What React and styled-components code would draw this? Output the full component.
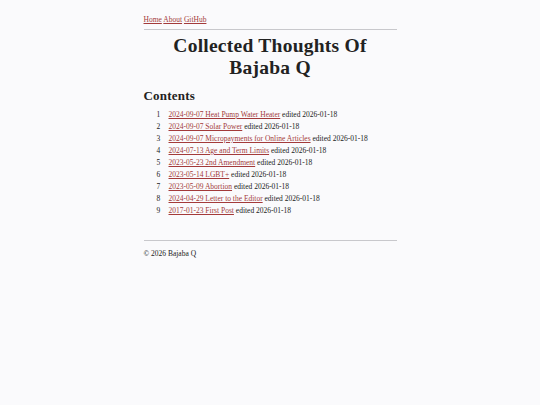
import React from 'react';
import styled, {createGlobalStyle} from 'styled-components';

const posts = [
    ['2024-09-07 Heat Pump Water Heater', '2026-01-18'],
    ['2024-09-07 Solar Power', '2026-01-18'],
    ['2024-09-07 Micropayments for Online Articles', '2026-01-18'],
    ['2024-07-13 Age and Term Limits', '2026-01-18'],
    ['2023-05-23 2nd Amendment', '2026-01-18'],
    ['2023-05-14 LGBT+', '2026-01-18'],
    ['2023-05-09 Abortion', '2026-01-18'],
    ['2024-04-29 Letter to the Editor', '2026-01-18'],
    ['2017-01-23 First Post', '2026-01-18'],
];

const App = () => {
    return (
        <>
            <Global />
            <Page>
                <Nav>
                    <Link href="#">Home</Link> <Link href="#">About</Link> <Link href="#">GitHub</Link>
                </Nav>
                <Rule />
                <Title>Collected Thoughts Of<br />Bajaba Q</Title>
                <Heading>Contents</Heading>
                <List>
                    {posts.map(([title, edited], i) => (
                        <Item key={title}>
                            <Num>{i + 1}</Num>
                            <span><Link href="#">{title}</Link> edited {edited}</span>
                        </Item>
                    ))}
                </List>
                <FootRule />
                <Footer>© 2026 Bajaba Q</Footer>
            </Page>
        </>
    );
}

const Global = createGlobalStyle`
body{
    margin: 0;
    background: #fafafc;
    color: #222;
    font-family: "Liberation Serif", "Times New Roman", serif;
}
`;

const Page = styled.div`
width: 253px;
margin: 0 auto;
padding-top: 15px;
`;

const Nav = styled.nav`
font-size: 7.5px;
line-height: 10px;
`;

const Link = styled.a`
color: #a33a3a;
text-decoration: underline;
`;

const Rule = styled.hr`
border: none;
border-top: 1px solid #c8c8cc;
margin: 4px 0 0;
`;

const Title = styled.h1`
font-size: 19.5px;
line-height: 22px;
letter-spacing: 0.25px;
text-align: center;
margin: 5px 0 0;
font-weight: bold;
`;

const Heading = styled.h2`
font-size: 13px;
line-height: 16px;
letter-spacing: 0.2px;
margin: 9px 0 0;
`;

const List = styled.ol`
list-style: none;
margin: 4px 0 0;
padding: 0;
font-size: 7.5px;
`;

const Item = styled.li`
display: flex;
height: 12.1px;
align-items: center;
`;

const Num = styled.span`
width: 25px;
padding-left: 13px;
box-sizing: border-box;
`;

const FootRule = styled.hr`
border: none;
border-top: 1px solid #c8c8cc;
margin: 23px 0 0;
`;

const Footer = styled.footer`
font-size: 7.5px;
line-height: 10px;
margin-top: 8px;
`;

export default App;
